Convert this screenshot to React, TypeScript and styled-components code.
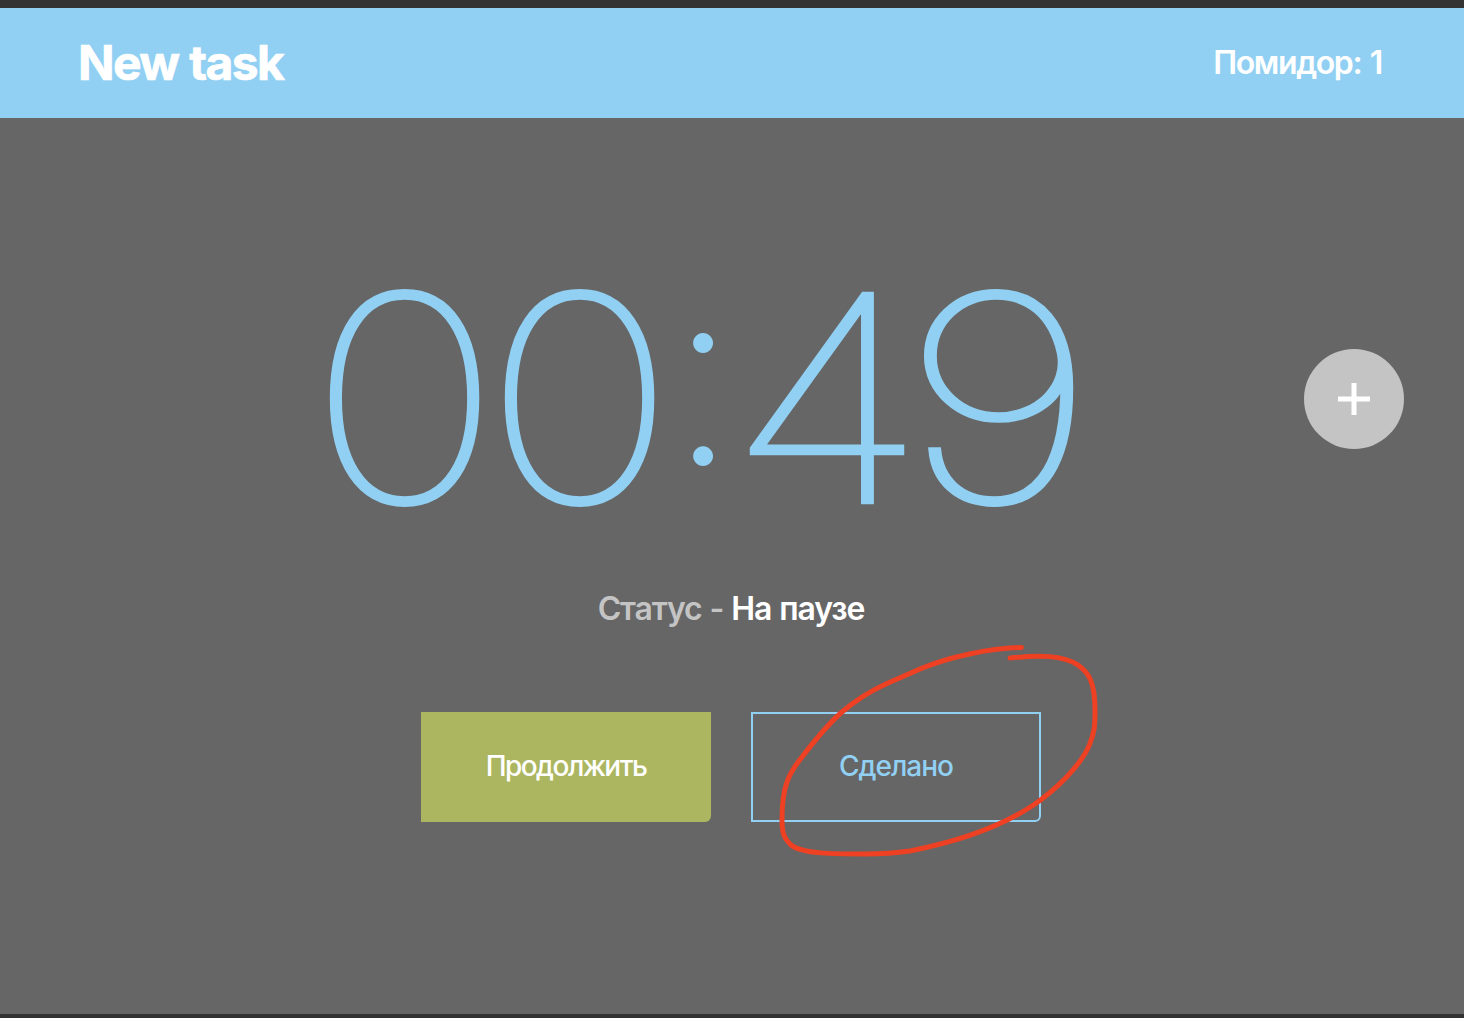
import React from 'react';
import styled, { createGlobalStyle } from 'styled-components';

const Global = createGlobalStyle`
  * { box-sizing: border-box; }
  body { margin: 0; background: #666; font-family: Inter, "Noto Sans", sans-serif; }
`;
const Page = styled.div`
  position: relative; height: 1018px; overflow: hidden; background: #666;
  border-top: 8px solid #333; border-bottom: 4px solid #333;
  display: flex; flex-direction: column;
`;
const Header = styled.header`
  height: 110px; flex: none; padding: 0 82px 0 78px; background: #91d0f3; color: #fff;
  display: flex; align-items: center; justify-content: space-between;
`;
const Title = styled.h1`
  margin: 0; font-size: 48px; line-height: 58px; font-weight: 700; letter-spacing: -1.6px; word-spacing: 1px;
  -webkit-text-stroke: 0.7px #fff;
`;
const Count = styled.span`
  font-size: 32px; line-height: 40px; font-weight: 600; letter-spacing: -1.4px; word-spacing: 2px;
`;
const TimerRow = styled.div`
  height: 300px; margin-top: 131px; padding: 0 60px 0 308px;
  display: flex; align-items: center; justify-content: space-between;
`;
const Time = styled.div`
  display: flex; height: 300px; font-weight: 100; color: #91d0f3; letter-spacing: -16px;
`;
const Digit = styled.span<{ $width: number; $stretch: number }>`
  width: ${p => p.$width}px; display: flex; justify-content: center;
  font-size: 286px; line-height: 299px; transform: scaleX(${p => p.$stretch});
  -webkit-text-stroke: 4.3px #91d0f3;
`;
const Colon = styled.span`
  width: 71px; display: flex; justify-content: center; font-weight: 200;
  font-size: 254px; line-height: 300px; transform: translate(1.5px, -26px);
`;
const Add = styled.button`
  width: 100px; height: 100px; flex: none; padding: 0; border: 0; border-radius: 50%;
  background: #c4c4c4; display: flex; align-items: center; justify-content: center;
`;
const Status = styled.p`
  margin: 40px 0 0; padding-right: 2px; text-align: center; font-size: 32px; line-height: 40px; font-weight: 600;
  color: #c4c4c4; letter-spacing: -1.12px; word-spacing: 1px; white-space: nowrap;
  b { color: #fff; font-weight: 600; }
`;
const Actions = styled.div`
  display: flex; justify-content: center; gap: 40px; margin-top: 83px; padding-right: 2px;
`;
const Button = styled.button<{ $outline?: boolean }>`
  width: 290px; height: 110px; padding: 0 0 2px; border-radius: 0 0 6px 0; font: inherit;
  font-size: 28px; font-weight: 500; letter-spacing: ${p => (p.$outline ? '-1px' : '-1.55px')};
  color: ${p => (p.$outline ? '#91d0f3' : '#fff')};
  background: ${p => (p.$outline ? 'transparent' : '#acb660')};
  border: ${p => (p.$outline ? '2px solid #91d0f3' : '0')};
`;
const Marker = styled.svg`
  position: absolute; left: 760px; top: 622px;
`;

export default function App() {
  return (
    <Page>
      <Global />
      <Header><Title>New task</Title><Count>Помидор: 1</Count></Header>
      <TimerRow>
        <Time>
          <Digit $width={175} $stretch={1.133}>0</Digit>
          <Digit $width={175} $stretch={1.133}>0</Digit>
          <Colon>:</Colon>
          <Digit $width={177} $stretch={1.168}>4</Digit>
          <Digit $width={166} $stretch={1.2}>9</Digit>
        </Time>
        <Add aria-label="+">
          <svg width="32" height="32" viewBox="0 0 32 32"><path d="M16 0V32M0 16H32" stroke="#fff" strokeWidth="5" /></svg>
        </Add>
      </TimerRow>
      <Status>Статус - <b>На паузе</b></Status>
      <Actions><Button>Продолжить</Button><Button $outline>Сделано</Button></Actions>
      <Marker width="360" height="250" viewBox="760 630 360 250" fill="none" stroke="#ee4023" strokeWidth="5" strokeLinecap="round" strokeLinejoin="round">
        <path d="M1021.500 647.500C990 648 948 657 920 669L887 683.500C868 692 856 700 842 712C827 725 812 744 802 757C794 767 790 773 787 782C783 793 782 803 782 820C782 835 785 839 791 845C802 854 835 854 865 854C885 854 896 853 910 851C956 842 1000 827 1032 806C1056 790 1080 766 1089 746C1095 732 1095 724 1095 711C1095 682 1089 673 1078 665C1063 655 1039 655 1010 658" />
      </Marker>
    </Page>
  );
}
